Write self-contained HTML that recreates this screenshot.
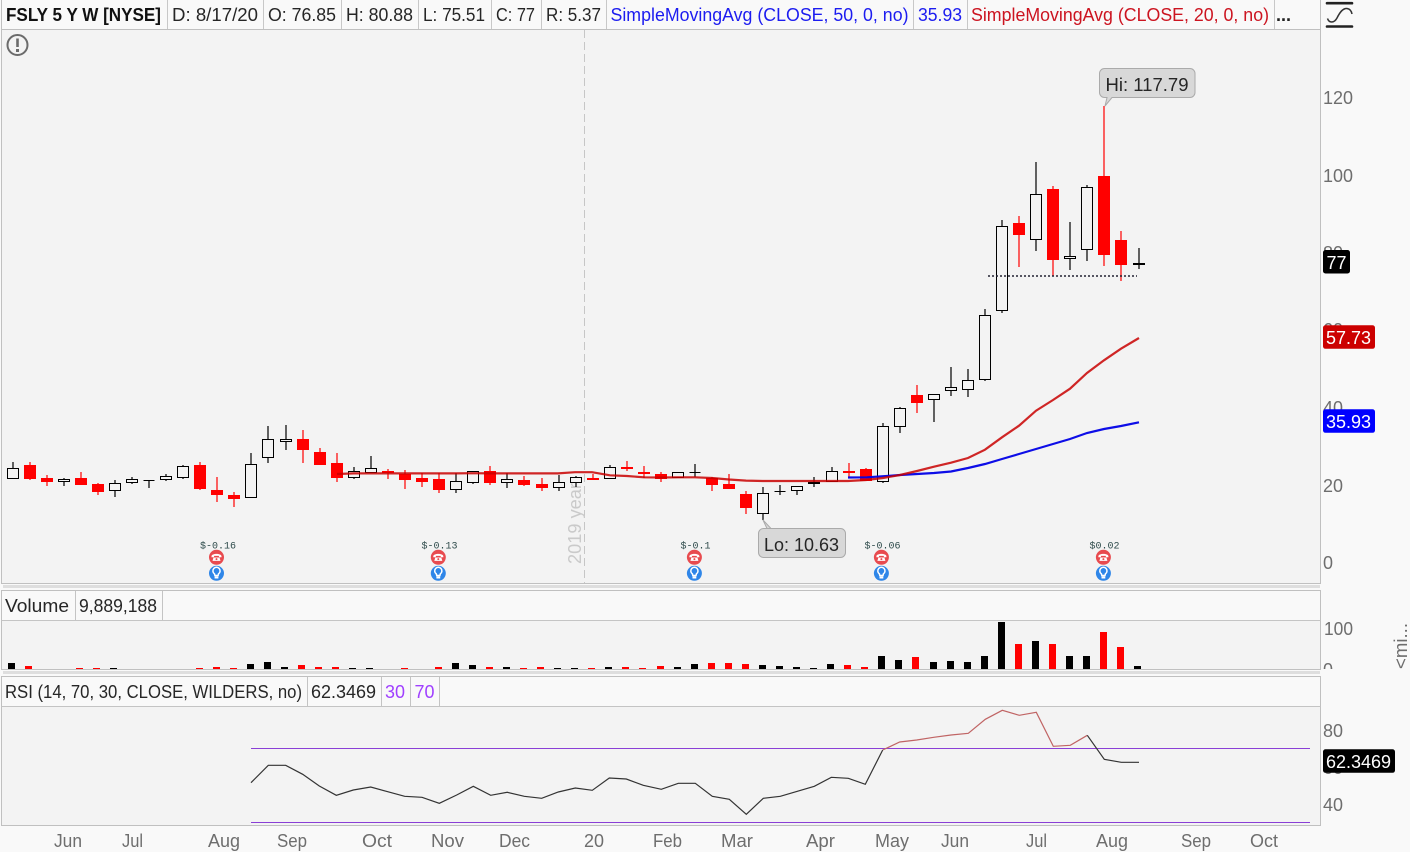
<!DOCTYPE html>
<html><head><meta charset="utf-8"><title>FSLY chart</title>
<style>
html,body{margin:0;padding:0;background:#f9f9f9;width:1410px;height:852px;overflow:hidden}
svg{display:block;position:absolute;left:0;top:0}
text{font-family:"Liberation Sans",sans-serif;font-size:18px}
.h{fill:#262626}.a{fill:#6e6e6e}
</style></head><body>
<svg width="1410" height="852" viewBox="0 0 1410 852" xmlns="http://www.w3.org/2000/svg">
<defs>
<clipPath id="vc"><rect x="1321" y="600" width="60" height="69"/></clipPath>
<g id="ph"><circle r="7.5" fill="#e84b4f"/><path d="M-5 -1.2C-4.6 -4.2 4.6 -4.2 5 -1.2L5 0H2.6L2.3 -1.4H-2.3L-2.6 0H-5Z" fill="#fff"/><path d="M-3 0.2H3L4 3.6H-4Z" fill="#fff"/><circle cy="1.8" r="1" fill="#e84b4f"/></g>
<g id="bu"><circle r="7.5" fill="#2f86e8"/><path d="M-1.6 2.2L-2 0.6A3.6 3.6 0 1 1 2 0.6L1.6 2.2Z" fill="#2f86e8" stroke="#fff" stroke-width="1.5"/><rect x="-1.9" y="3" width="3.8" height="2.2" fill="#fff"/></g>
</defs>

<!-- main panel -->
<rect x="1.5" y="0" width="1319" height="583.5" fill="#f3f3f3" stroke="#c0c0c0"/>
<rect x="2" y="0" width="1318" height="29" fill="#f9f9f9"/>
<path d="M1.5 29.5H1320" stroke="#c0c0c0" fill="none"/>
<path d="M167.5 0V29M263.5 0V29M341.5 0V29M418.5 0V29M491.5 0V29M541.5 0V29M606.5 0V29M913.5 0V29M967.5 0V29M1274.5 0V29" stroke="#c8c8c8" fill="none"/>
<rect x="1320" y="0" width="1" height="584" fill="#c0c0c0"/>

<text x="6" y="21" textLength="155" lengthAdjust="spacingAndGlyphs" style="font-weight:bold;fill:#111">FSLY 5 Y W [NYSE]</text>
<text class="h" x="172" y="21" textLength="86" lengthAdjust="spacingAndGlyphs">D: 8/17/20</text>
<text class="h" x="268" y="21" textLength="68" lengthAdjust="spacingAndGlyphs">O: 76.85</text>
<text class="h" x="346" y="21" textLength="67" lengthAdjust="spacingAndGlyphs">H: 80.88</text>
<text class="h" x="423" y="21" textLength="62" lengthAdjust="spacingAndGlyphs">L: 75.51</text>
<text class="h" x="496" y="21" textLength="39" lengthAdjust="spacingAndGlyphs">C: 77</text>
<text class="h" x="546" y="21" textLength="55" lengthAdjust="spacingAndGlyphs">R: 5.37</text>
<text x="610.5" y="21" textLength="298" lengthAdjust="spacingAndGlyphs" fill="#1c1cf0">SimpleMovingAvg (CLOSE, 50, 0, no)</text>
<text x="918" y="21" textLength="44" lengthAdjust="spacingAndGlyphs" fill="#1c1cf0">35.93</text>
<text x="971" y="21" textLength="298" lengthAdjust="spacingAndGlyphs" fill="#cc1420">SimpleMovingAvg (CLOSE, 20, 0, no)</text>
<text x="1276" y="21" textLength="15" lengthAdjust="spacingAndGlyphs" style="font-weight:bold;fill:#222">...</text>

<!-- top-right icon -->
<path d="M1327 3.2H1352M1327 26.5H1352" stroke="#222" stroke-width="2.6" fill="none" stroke-linecap="round"/>
<path d="M1327.5 18.5C1329 23 1334 23.5 1337 18C1340 12 1343 8 1347 8.5C1350 9 1351.5 11 1352 14" stroke="#333" stroke-width="1.5" fill="none"/>

<!-- warning icon -->
<circle cx="17.5" cy="45" r="10" fill="none" stroke="#6b6b6b" stroke-width="2"/>
<path d="M17.5 38.5V47" stroke="#6b6b6b" stroke-width="2.6" fill="none"/>
<rect x="16" y="49" width="3" height="3" fill="#6b6b6b"/>

<!-- 2019 marker -->
<path d="M584.5 30V583" stroke="#c6c6c6" stroke-dasharray="8 4" fill="none"/>
<text transform="translate(581,564) rotate(-90)" fill="#cacaca" textLength="81" lengthAdjust="spacingAndGlyphs" style="font-size:18px">2019 year</text>

<!-- white candle wicks -->
<path fill="none" stroke="#000" stroke-width="1.2" d="M13 462V478M64 478V486M115 480V497M132 477V484M149 480V488M166 474V481M183 465V479M251 453V497M268 426V463M286 425V450M354 467V479M371 456V472M456 473V493M473 471V484M507 473V488M559 475V491M576 476V487M610 465V479M678 472V477M695 464V477M763 487V520M780 485V495M797 486V495M814 477V487M832 467V481M883 423V483M900 407V433M934 394V422M951 367V396M968 369V397M985 309V381M1002 220V313M1036 162V251M1070 222V270M1087 185V261M1139 248V269"/>
<!-- white candle bodies -->
<path fill="#f3f3f3" stroke="#000" stroke-width="1.2" shape-rendering="crispEdges" d="M7.5 468.5h11v10h-11zM58.5 479.5h11v2h-11zM109.5 483.5h11v7h-11zM126.5 479.5h11v3h-11zM143.5 480.5h11v0h-11zM160.5 476.5h11v3h-11zM177.5 466.5h11v11h-11zM245.5 464.5h11v33h-11zM262.5 439.5h11v18h-11zM280.5 439.5h11v2h-11zM348.5 471.5h11v6h-11zM365.5 468.5h11v4h-11zM450.5 481.5h11v8h-11zM467.5 471.5h11v11h-11zM501.5 479.5h11v3h-11zM553.5 482.5h11v5h-11zM570.5 477.5h11v5h-11zM604.5 467.5h11v11h-11zM672.5 472.5h11v5h-11zM689.5 472.5h11v0h-11zM757.5 493.5h11v20h-11zM774.5 491.5h11v0h-11zM791.5 486.5h11v4h-11zM808.5 482.5h11v1h-11zM826.5 471.5h11v10h-11zM877.5 426.5h11v55h-11zM894.5 408.5h11v18h-11zM928.5 394.5h11v5h-11zM945.5 387.5h11v3h-11zM962.5 380.5h11v9h-11zM979.5 315.5h11v64h-11zM996.5 226.5h11v84h-11zM1030.5 194.5h11v45h-11zM1064.5 256.5h11v2h-11zM1081.5 187.5h11v62h-11z"/>
<rect x="1133" y="263" width="12" height="2" fill="#000"/>

<!-- red wicks -->
<path fill="none" stroke="#f00" stroke-width="1.2" d="M30 462V480M47 475V486M81 472V485M98 483V495M200 462V490M217 477V502M234 492V507M303 430V463M320 448V465M337 453V482M388 469V479M405 470V489M422 473V487M439 473V493M490 466V485M524 476V486M542 478V491M593 474V480M627 461V471M644 466V478M661 472V482M712 477V491M729 474V489M746 491V514M849 463V478M866 468V481M917 385V413M1019 216V267M1053 186V276M1104 106V266M1121 231V281"/>
<!-- red bodies -->
<path fill="#f00" shape-rendering="crispEdges" d="M24 465h12v14h-12zM41 478h12v4h-12zM75 478h12v7h-12zM92 484h12v8h-12zM194 465h12v24h-12zM211 490h12v5h-12zM228 495h12v4h-12zM297 439h12v11h-12zM314 452h12v13h-12zM331 463h12v15h-12zM382 471h12v2h-12zM399 474h12v6h-12zM416 478h12v4h-12zM433 479h12v11h-12zM484 471h12v12h-12zM518 480h12v5h-12zM536 484h12v4h-12zM587 478h12v2h-12zM621 467h12v2h-12zM638 472h12v2h-12zM655 474h12v5h-12zM706 478h12v7h-12zM723 484h12v5h-12zM740 494h12v14h-12zM843 471h12v2h-12zM860 469h12v12h-12zM911 395h12v8h-12zM1013 223h12v12h-12zM1047 189h12v71h-12zM1098 176h12v79h-12zM1115 240h12v25h-12z"/>

<!-- SMA lines -->
<polyline fill="none" stroke="#0000e6" stroke-width="2.2" stroke-opacity=".95" points="848,477.5 867,477.3 887,476 900,475 917,474 934,473 951,471.5 968,468 985,464 1002,459 1019,454 1036,449 1053,444 1070,439 1087,433 1104,429 1121,426 1139,422.3"/>
<polyline fill="none" stroke="#c80000" stroke-width="2.2" stroke-opacity=".85" points="337,474 354,473.4 371,473.4 388,473.4 405,473.4 422,473.4 439,473.4 456,473.4 473,473.2 490,473.4 507,473.4 524,473.4 541,473.4 558,473.4 575,472.2 592,472.2 610,475.3 627,476 644,477.3 661,477.5 678,477.3 695,477.3 712,478 729,479.5 746,480.6 763,481 780,481 797,481 814,481 831,481 848,481 866,480 883,478 900,475 917,471 934,466.7 951,462.7 968,458 985,449.7 1002,437.3 1019,425.7 1036,410.7 1053,400 1070,388.7 1087,373 1104,360.3 1121,348.7 1139,338"/>

<!-- dotted price line -->
<path d="M988 276H1137" stroke="#223" stroke-width="1.4" stroke-dasharray="2 2" fill="none"/>

<!-- callouts -->
<path d="M1104.5 68.5H1190a5 5 0 0 1 5 5V92.5a5 5 0 0 1 -5 5H1112L1105 106L1107 97.5H1104.5a5 5 0 0 1 -5 -5V73.5a5 5 0 0 1 5 -5Z" fill="#d8d8d8" stroke="#aaa"/>
<text class="h" x="1105.5" y="91" textLength="83" lengthAdjust="spacingAndGlyphs">Hi: 117.79</text>
<path d="M763.5 528.5H771L763 520L767 528.5" fill="#d8d8d8" stroke="#aaa"/>
<rect x="758.5" y="528.5" width="87" height="29" rx="5" fill="#d8d8d8" stroke="#aaa"/>
<path d="M764 529.5H771" stroke="#d8d8d8" fill="none"/>
<text class="h" x="764" y="551" textLength="75" lengthAdjust="spacingAndGlyphs">Lo: 10.63</text>

<!-- earnings -->
<g fill="#2d4a4a">
<text x="200" y="548.5" textLength="36" lengthAdjust="spacingAndGlyphs" style="font-family:'Liberation Mono',monospace;font-size:10px">$-0.16</text>
<text x="421.5" y="548.5" textLength="36" lengthAdjust="spacingAndGlyphs" style="font-family:'Liberation Mono',monospace;font-size:10px">$-0.13</text>
<text x="680.5" y="548.5" textLength="30" lengthAdjust="spacingAndGlyphs" style="font-family:'Liberation Mono',monospace;font-size:10px">$-0.1</text>
<text x="864.5" y="548.5" textLength="36" lengthAdjust="spacingAndGlyphs" style="font-family:'Liberation Mono',monospace;font-size:10px">$-0.06</text>
<text x="1089.5" y="548.5" textLength="30" lengthAdjust="spacingAndGlyphs" style="font-family:'Liberation Mono',monospace;font-size:10px">$0.02</text>
</g>
<use href="#ph" x="216.5" y="557.3"/><use href="#bu" x="216.5" y="573.3"/>
<use href="#ph" x="438.3" y="557.3"/><use href="#bu" x="438.3" y="573.3"/>
<use href="#ph" x="694.4" y="557.3"/><use href="#bu" x="694.4" y="573.3"/>
<use href="#ph" x="881.4" y="557.3"/><use href="#bu" x="881.4" y="573.3"/>
<use href="#ph" x="1103.4" y="557.3"/><use href="#bu" x="1103.4" y="573.3"/>

<!-- price axis -->
<text class="a" x="1323" y="104" textLength="30" lengthAdjust="spacingAndGlyphs">120</text>
<text class="a" x="1323" y="182" textLength="30" lengthAdjust="spacingAndGlyphs">100</text>
<text class="a" x="1323" y="259" textLength="20" lengthAdjust="spacingAndGlyphs">80</text>
<text class="a" x="1323" y="336" textLength="20" lengthAdjust="spacingAndGlyphs">60</text>
<text class="a" x="1323" y="414" textLength="20" lengthAdjust="spacingAndGlyphs">40</text>
<text class="a" x="1323" y="492" textLength="20" lengthAdjust="spacingAndGlyphs">20</text>
<text class="a" x="1323" y="569" textLength="10" lengthAdjust="spacingAndGlyphs">0</text>
<rect x="1323" y="250" width="27" height="23.5" rx="2.5" fill="#000"/>
<text x="1326.5" y="269" textLength="20" lengthAdjust="spacingAndGlyphs" fill="#fff">77</text>
<rect x="1323" y="325.3" width="52" height="23.5" rx="2.5" fill="#cc0000"/>
<text x="1326" y="344" textLength="45" lengthAdjust="spacingAndGlyphs" fill="#fff">57.73</text>
<rect x="1323" y="409.3" width="52" height="23.5" rx="2.5" fill="#0000ff"/>
<text x="1326" y="428" textLength="45" lengthAdjust="spacingAndGlyphs" fill="#fff">35.93</text>

<!-- separator bands -->
<rect x="3" y="585" width="1317" height="3" fill="#dedede"/>
<rect x="3" y="671" width="1317" height="3" fill="#dedede"/>

<!-- volume panel -->
<rect x="1.5" y="590.5" width="1319" height="79" fill="#f3f3f3" stroke="#c0c0c0"/>
<rect x="2" y="591" width="1318" height="29" fill="#f9f9f9"/>
<path d="M1.5 620.5H1320.5M75.5 591V620M162.5 591V620" stroke="#c4c4c4" fill="none"/>
<text class="h" x="5" y="612" textLength="64" lengthAdjust="spacingAndGlyphs">Volume</text>
<text class="h" x="79" y="612" textLength="78" lengthAdjust="spacingAndGlyphs">9,889,188</text>
<path shape-rendering="crispEdges" fill="#000" d="M8 669v-6h7v6zM110 669v-1h7v1zM247 669v-5h7v5zM264 669v-7h7v7zM281 669v-2h7v2zM349 669v-1h7v1zM366 669v-1h7v1zM452 669v-6h7v6zM469 669v-4h7v4zM503 669v-2h7v2zM554 669v-1h7v1zM571 669v-1h7v1zM605 669v-2h7v2zM674 669v-2h7v2zM691 669v-5h7v5zM759 669v-4h7v4zM776 669v-3h7v3zM793 669v-2h7v2zM810 669v-1h7v1zM827 669v-5h7v5zM878 669v-13h7v13zM895 669v-9h7v9zM930 669v-7h7v7zM947 669v-8h7v8zM964 669v-7h7v7zM981 669v-13h7v13zM998 669v-47h7v47zM1032 669v-28h7v28zM1066 669v-13h7v13zM1083 669v-13h7v13zM1134 669v-3h7v3z"/>
<path shape-rendering="crispEdges" fill="#f00" d="M25 669v-3h7v3zM76 669v-1h7v1zM93 669v-1h7v1zM196 669v-1h7v1zM213 669v-2h7v2zM230 669v-1h7v1zM298 669v-4h7v4zM315 669v-2h7v2zM332 669v-2h7v2zM401 669v-1h7v1zM435 669v-2h7v2zM486 669v-2h7v2zM520 669v-1h7v1zM537 669v-2h7v2zM588 669v-1h7v1zM622 669v-2h7v2zM639 669v-1h7v1zM657 669v-3h7v3zM708 669v-6h7v6zM725 669v-6h7v6zM742 669v-5h7v5zM844 669v-4h7v4zM861 669v-2h7v2zM912 669v-12h7v12zM1015 669v-25h7v25zM1049 669v-25h7v25zM1100 669v-37h7v37zM1117 669v-22h7v22z"/>
<text class="a" x="1324" y="635" textLength="29" lengthAdjust="spacingAndGlyphs">100</text>
<text class="a" x="1323" y="676" textLength="10" lengthAdjust="spacingAndGlyphs" clip-path="url(#vc)">0</text>
<text class="a" transform="translate(1407,669) rotate(-90)" textLength="46" lengthAdjust="spacingAndGlyphs">&lt;mi...</text>

<!-- RSI panel -->
<rect x="1.5" y="676.5" width="1319" height="149" fill="#f3f3f3" stroke="#c0c0c0"/>
<rect x="2" y="677" width="1318" height="29" fill="#f9f9f9"/>
<path d="M1.5 706.5H1320.5M307.5 677V706M381.5 677V706M410.5 677V706M439.5 677V706" stroke="#c4c4c4" fill="none"/>
<text class="h" x="5" y="698" textLength="297" lengthAdjust="spacingAndGlyphs">RSI (14, 70, 30, CLOSE, WILDERS, no)</text>
<text class="h" x="311" y="698" textLength="65" lengthAdjust="spacingAndGlyphs">62.3469</text>
<text x="385" y="698" textLength="20" lengthAdjust="spacingAndGlyphs" fill="#a040ff">30</text>
<text x="414.5" y="698" textLength="20" lengthAdjust="spacingAndGlyphs" fill="#a040ff">70</text>

<path d="M251 748.5H1310M251 822.5H1310" stroke="#8a3fd6" stroke-width="1.1" fill="none"/>
<polyline fill="none" stroke="#333" stroke-width="1.2" points="251,782.7 268.3,765.3 285.7,765.3 302.7,774.3 319.3,786 336.3,795.3 353.3,790 370.7,787 387.7,791.7 404.7,796.3 422,797.3 439.3,803.3 456.7,795 473.3,786.3 490.7,795.3 507.3,792.3 524.3,796.3 541.7,798.3 558.3,792 575.3,788 592.3,790.3 609.3,778 626.3,779 643.3,785.3 661.3,789.3 678.3,783.3 695.3,783.3 712.3,796.3 729.3,799.3 746.3,814.3 763.3,798.3 780.3,796.3 797.3,791.3 814.3,786.3 831.3,777.3 848.3,778.3 865.3,784.3 882.7,750"/>
<polyline fill="none" stroke="#c06464" stroke-width="1.2" points="882.7,750 899.7,742 916.7,740 933.7,737.3 951,735 968.3,733.3 985.3,719.3 1002.3,710.3 1019.3,715.3 1036.3,712.3 1053.3,746.3 1070.3,745.3 1087.3,735.3"/>
<polyline fill="none" stroke="#333" stroke-width="1.2" points="1087.3,735.3 1104.3,759.3 1121.3,762.3 1139,762.3"/>

<text class="a" x="1323" y="737" textLength="20" lengthAdjust="spacingAndGlyphs">80</text>
<text class="a" x="1323" y="774" textLength="20" lengthAdjust="spacingAndGlyphs">60</text>
<text class="a" x="1323" y="811" textLength="20" lengthAdjust="spacingAndGlyphs">40</text>
<rect x="1323" y="749.3" width="72" height="23.5" rx="2.5" fill="#000"/>
<text x="1326" y="768" textLength="65" lengthAdjust="spacingAndGlyphs" fill="#fff">62.3469</text>

<!-- time axis -->
<text class="a" x="54" y="847" textLength="28" lengthAdjust="spacingAndGlyphs">Jun</text>
<text class="a" x="122" y="847" textLength="21" lengthAdjust="spacingAndGlyphs">Jul</text>
<text class="a" x="208" y="847" textLength="32" lengthAdjust="spacingAndGlyphs">Aug</text>
<text class="a" x="277" y="847" textLength="30" lengthAdjust="spacingAndGlyphs">Sep</text>
<text class="a" x="362" y="847" textLength="30" lengthAdjust="spacingAndGlyphs">Oct</text>
<text class="a" x="431" y="847" textLength="33" lengthAdjust="spacingAndGlyphs">Nov</text>
<text class="a" x="499" y="847" textLength="31" lengthAdjust="spacingAndGlyphs">Dec</text>
<text class="a" x="584" y="847" textLength="20" lengthAdjust="spacingAndGlyphs">20</text>
<text class="a" x="653" y="847" textLength="29" lengthAdjust="spacingAndGlyphs">Feb</text>
<text class="a" x="721" y="847" textLength="32" lengthAdjust="spacingAndGlyphs">Mar</text>
<text class="a" x="806" y="847" textLength="29" lengthAdjust="spacingAndGlyphs">Apr</text>
<text class="a" x="875" y="847" textLength="34" lengthAdjust="spacingAndGlyphs">May</text>
<text class="a" x="941" y="847" textLength="28" lengthAdjust="spacingAndGlyphs">Jun</text>
<text class="a" x="1026" y="847" textLength="21" lengthAdjust="spacingAndGlyphs">Jul</text>
<text class="a" x="1096" y="847" textLength="32" lengthAdjust="spacingAndGlyphs">Aug</text>
<text class="a" x="1181" y="847" textLength="30" lengthAdjust="spacingAndGlyphs">Sep</text>
<text class="a" x="1250" y="847" textLength="28" lengthAdjust="spacingAndGlyphs">Oct</text>
</svg>
</body></html>
